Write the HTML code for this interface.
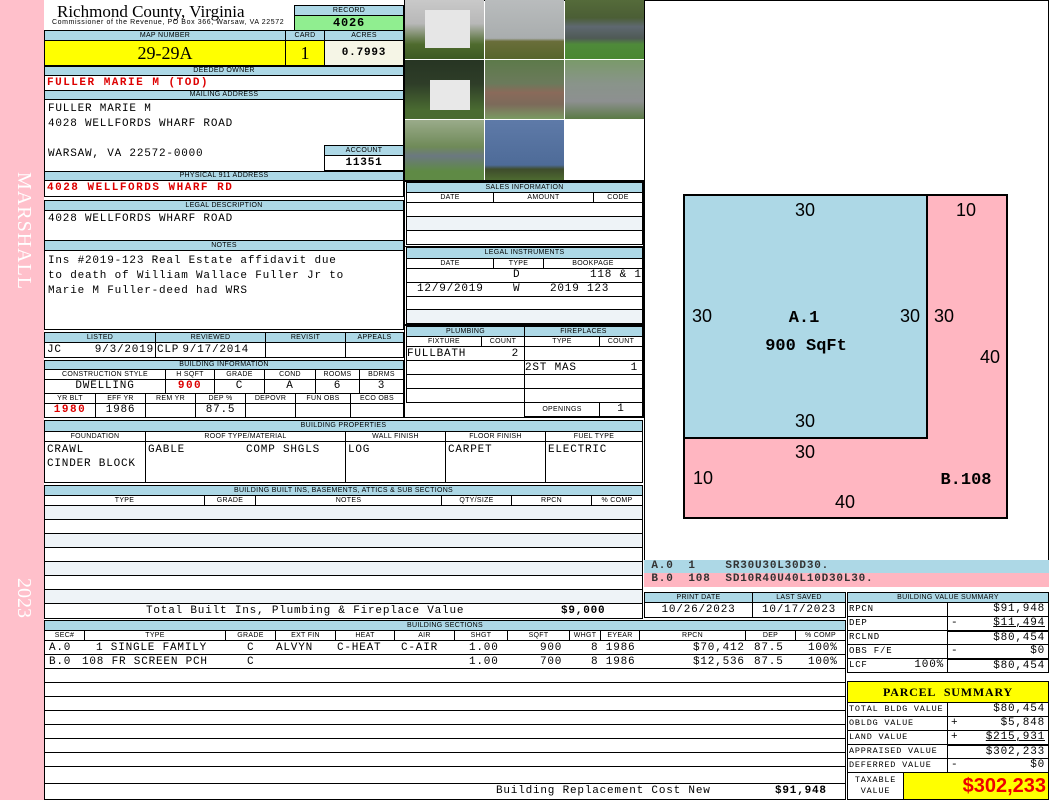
<!DOCTYPE html><html><head><meta charset="utf-8"><style>
*{margin:0;padding:0;box-sizing:border-box}
body{width:1050px;height:800px;position:relative;background:#fff;overflow:hidden;font-family:"Liberation Sans",sans-serif}
.a{position:absolute}
.h{position:absolute;background:#add8e6;border:1px solid #000;font:7px/9px "Liberation Sans",sans-serif;letter-spacing:.3px;text-align:center;color:#000;overflow:hidden;white-space:nowrap}
.c{position:absolute;border:1px solid #000;font:11px/13px "Liberation Mono",monospace;letter-spacing:.8px;color:#000;white-space:nowrap;overflow:hidden;background:#fff}
.m{font-family:"Liberation Mono",monospace}
.r{color:#d00;font-weight:bold;letter-spacing:1.5px}
.rt{text-align:right;padding-right:3px}
.ct{text-align:center}
.lb{background:#eef3f7}
.s{letter-spacing:0}
</style></head><body>
<div class="a" style="left:0;top:0;width:44px;height:800px;background:#ffc0cb"></div>
<div class="a" style="left:9px;top:172px;width:26px;height:150px;color:#fff;font:20px 'Liberation Serif',serif;writing-mode:vertical-rl;letter-spacing:1px">MARSHALL</div>
<div class="a" style="left:9px;top:578px;width:26px;height:60px;color:#fff;font:20px 'Liberation Serif',serif;writing-mode:vertical-rl">2023</div>

<div class="a" style="left:57px;top:2px;font:17px/19px 'Liberation Serif',serif">Richmond County, Virginia</div>
<div class="a" style="left:52px;top:19px;font:7px/8px 'Liberation Sans',sans-serif;letter-spacing:.6px">Commissioner of the Revenue, PO Box 366, Warsaw, VA 22572</div>
<div class="h" style="left:294px;top:5px;width:110px;height:11px">RECORD</div>
<div class="c ct" style="left:294px;top:15px;width:110px;height:16px;background:#90ee90;font-weight:bold;font-size:12px;line-height:14px">4026</div>

<div class="h" style="left:44px;top:30px;width:242px;height:11px">MAP NUMBER</div>
<div class="h" style="left:285px;top:30px;width:40px;height:11px">CARD</div>
<div class="h" style="left:324px;top:30px;width:80px;height:11px">ACRES</div>
<div class="c ct s" style="left:44px;top:40px;width:242px;height:26px;background:#ffff00;font:18px/24px 'Liberation Serif',serif">29-29A</div>
<div class="c ct s" style="left:285px;top:40px;width:40px;height:26px;background:#ffff00;font:18px/24px 'Liberation Serif',serif">1</div>
<div class="c ct" style="left:324px;top:40px;width:80px;height:26px;background:#f5f5e6;font-weight:bold;line-height:24px">0.7993</div>

<div class="h" style="left:44px;top:66px;width:360px;height:10px;line-height:8px">DEEDED OWNER</div>
<div class="c r" style="left:44px;top:75px;width:360px;height:16px;padding-left:2px;line-height:15px">FULLER MARIE M (TOD)</div>
<div class="h" style="left:44px;top:90px;width:360px;height:10px;line-height:8px">MAILING ADDRESS</div>
<div class="c" style="left:44px;top:99px;width:360px;height:73px;padding:2px 0 0 3px;line-height:15px">FULLER MARIE M<br>4028 WELLFORDS WHARF ROAD<br><br>WARSAW, VA 22572-0000</div>
<div class="h" style="left:324px;top:145px;width:80px;height:11px">ACCOUNT</div>
<div class="c ct" style="left:324px;top:155px;width:80px;height:16px;font-weight:bold;line-height:15px">11351</div>
<div class="h" style="left:44px;top:171px;width:360px;height:10px;line-height:8px">PHYSICAL 911 ADDRESS</div>
<div class="c r" style="left:44px;top:180px;width:360px;height:17px;padding-left:2px;line-height:15px">4028 WELLFORDS WHARF RD</div>

<div class="h" style="left:44px;top:200px;width:360px;height:11px">LEGAL DESCRIPTION</div>
<div class="c" style="left:44px;top:210px;width:360px;height:31px;padding:2px 0 0 3px">4028 WELLFORDS WHARF ROAD</div>
<div class="h" style="left:44px;top:240px;width:360px;height:11px">NOTES</div>
<div class="c" style="left:44px;top:250px;width:360px;height:80px;padding:3px 0 0 3px;line-height:15px">Ins #2019-123 Real Estate affidavit due<br>to death of William Wallace Fuller Jr to<br>Marie M Fuller-deed had WRS</div>

<div class="h" style="left:44px;top:332px;width:112px;height:11px">LISTED</div>
<div class="h" style="left:155px;top:332px;width:111px;height:11px">REVIEWED</div>
<div class="h" style="left:265px;top:332px;width:81px;height:11px">REVISIT</div>
<div class="h" style="left:345px;top:332px;width:59px;height:11px">APPEALS</div>
<div class="c" style="left:44px;top:342px;width:112px;height:16px;line-height:14px"><span class="a" style="left:2px">JC</span><span class="a" style="right:1px">9/3/2019</span></div>
<div class="c" style="left:155px;top:342px;width:111px;height:16px;line-height:14px"><span class="a" style="left:1px">CLP</span><span class="a" style="right:16px">9/17/2014</span></div>
<div class="c" style="left:265px;top:342px;width:81px;height:16px"></div>
<div class="c" style="left:345px;top:342px;width:59px;height:16px"></div>

<div class="h" style="left:44px;top:360px;width:360px;height:10px;line-height:8px">BUILDING INFORMATION</div>
<div class="h" style="left:44px;top:369px;width:122px;height:11px;background:#fff">CONSTRUCTION STYLE</div>
<div class="h" style="left:165px;top:369px;width:50px;height:11px;background:#fff">H SQFT</div>
<div class="h" style="left:214px;top:369px;width:51px;height:11px;background:#fff">GRADE</div>
<div class="h" style="left:264px;top:369px;width:52px;height:11px;background:#fff">COND</div>
<div class="h" style="left:315px;top:369px;width:45px;height:11px;background:#fff">ROOMS</div>
<div class="h" style="left:359px;top:369px;width:45px;height:11px;background:#fff">BDRMS</div>
<div class="c ct" style="left:44px;top:379px;width:122px;height:15px;line-height:13px">DWELLING</div>
<div class="c ct r" style="left:165px;top:379px;width:50px;height:15px;line-height:13px">900</div>
<div class="c ct" style="left:214px;top:379px;width:51px;height:15px;line-height:13px">C</div>
<div class="c ct" style="left:264px;top:379px;width:52px;height:15px;line-height:13px">A</div>
<div class="c ct" style="left:315px;top:379px;width:45px;height:15px;line-height:13px">6</div>
<div class="c ct" style="left:359px;top:379px;width:45px;height:15px;line-height:13px">3</div>
<div class="h" style="left:44px;top:393px;width:52px;height:11px;background:#fff">YR BLT</div>
<div class="h" style="left:95px;top:393px;width:51px;height:11px;background:#fff">EFF YR</div>
<div class="h" style="left:145px;top:393px;width:51px;height:11px;background:#fff">REM YR</div>
<div class="h" style="left:195px;top:393px;width:51px;height:11px;background:#fff">DEP %</div>
<div class="h" style="left:245px;top:393px;width:51px;height:11px;background:#fff">DEPOVR</div>
<div class="h" style="left:295px;top:393px;width:56px;height:11px;background:#fff">FUN OBS</div>
<div class="h" style="left:350px;top:393px;width:54px;height:11px;background:#fff">ECO OBS</div>
<div class="c ct r" style="left:44px;top:403px;width:52px;height:15px;line-height:13px">1980</div>
<div class="c ct" style="left:95px;top:403px;width:51px;height:15px;line-height:13px">1986</div>
<div class="c" style="left:145px;top:403px;width:51px;height:15px"></div>
<div class="c ct" style="left:195px;top:403px;width:51px;height:15px;line-height:13px">87.5</div>
<div class="c" style="left:245px;top:403px;width:51px;height:15px"></div>
<div class="c" style="left:295px;top:403px;width:56px;height:15px"></div>
<div class="c" style="left:350px;top:403px;width:54px;height:15px"></div>

<!-- photos -->
<div class="a" style="left:404px;top:0;width:241px;height:181px;background:#fff;border:1px solid #000"></div>
<div class="a" style="left:405px;top:0;width:79px;height:59px;background:linear-gradient(#c9c9c9 0,#b8b8b8 40%,#4f6b2e 75%,#3d5a23)"><div class="a" style="left:20px;top:10px;width:45px;height:38px;background:#e6e6e6"></div></div>
<div class="a" style="left:485px;top:0;width:79px;height:59px;background:linear-gradient(#b9bcbd 0,#a9adae 65%,#6a6e3a 70%,#56652c)"></div>
<div class="a" style="left:565px;top:0;width:79px;height:59px;background:linear-gradient(#556b3a 0,#4b5e35 30%,#5e6870 45%,#4f5a55 65%,#4f8a3a 75%,#4a8832)"></div>
<div class="a" style="left:405px;top:60px;width:79px;height:59px;background:linear-gradient(#273523 0,#2e3d28 40%,#4a6b31 85%)"><div class="a" style="left:25px;top:20px;width:40px;height:30px;background:#e8e8e8"></div></div>
<div class="a" style="left:485px;top:60px;width:79px;height:59px;background:linear-gradient(#5d7a4a 0,#6b7a5b 40%,#8a6a5a 55%,#7c6a5a 75%,#7a9a62)"></div>
<div class="a" style="left:565px;top:60px;width:79px;height:59px;background:linear-gradient(#7a9a6a 0,#89948a 40%,#8d9090 70%,#5a7a45)"></div>
<div class="a" style="left:405px;top:120px;width:79px;height:60px;background:linear-gradient(#9aab8a 0,#6f8a58 45%,#6b7880 60%,#5f8a45 85%)"></div>
<div class="a" style="left:485px;top:120px;width:79px;height:60px;background:linear-gradient(#5e7aa8 0,#4e6b98 75%,#3e4c2c 82%,#4d6a30)"></div>

<!-- sales -->
<div class="a" style="left:404px;top:181px;width:240px;height:66px;border:1px solid #000"></div>
<div class="h" style="left:406px;top:182px;width:237px;height:11px">SALES INFORMATION</div>
<div class="h" style="left:406px;top:192px;width:88px;height:11px;background:#fff">DATE</div>
<div class="h" style="left:493px;top:192px;width:101px;height:11px;background:#fff">AMOUNT</div>
<div class="h" style="left:593px;top:192px;width:50px;height:11px;background:#fff">CODE</div>
<div class="c" style="left:406px;top:202px;width:237px;height:15px"></div>
<div class="c lb" style="left:406px;top:216px;width:237px;height:15px"></div>
<div class="c" style="left:406px;top:230px;width:237px;height:15px"></div>

<div class="a" style="left:404px;top:246px;width:240px;height:79px;border:1px solid #000"></div>
<div class="h" style="left:406px;top:247px;width:237px;height:12px">LEGAL INSTRUMENTS</div>
<div class="h" style="left:406px;top:258px;width:88px;height:11px;background:#fff">DATE</div>
<div class="h" style="left:493px;top:258px;width:51px;height:11px;background:#fff">TYPE</div>
<div class="h" style="left:543px;top:258px;width:100px;height:11px;background:#fff">BOOKPAGE</div>
<div class="c" style="left:406px;top:268px;width:237px;height:15px;line-height:13px"><span class="a" style="left:106px">D</span><span class="a" style="left:183px">118 &amp; 1</span></div>
<div class="c" style="left:406px;top:282px;width:237px;height:15px;line-height:13px"><span class="a" style="left:10px">12/9/2019</span><span class="a" style="left:106px">W</span><span class="a" style="left:143px">2019 123</span></div>
<div class="c" style="left:406px;top:296px;width:237px;height:14px"></div>
<div class="c lb" style="left:406px;top:309px;width:237px;height:15px"></div>

<div class="a" style="left:404px;top:325px;width:240px;height:93px;border:1px solid #000"></div>
<div class="h" style="left:406px;top:326px;width:119px;height:11px">PLUMBING</div>
<div class="h" style="left:524px;top:326px;width:119px;height:11px">FIREPLACES</div>
<div class="h" style="left:406px;top:336px;width:76px;height:11px;background:#fff">FIXTURE</div>
<div class="h" style="left:481px;top:336px;width:44px;height:11px;background:#fff">COUNT</div>
<div class="h" style="left:524px;top:336px;width:76px;height:11px;background:#fff">TYPE</div>
<div class="h" style="left:599px;top:336px;width:44px;height:11px;background:#fff">COUNT</div>
<div class="c" style="left:406px;top:346px;width:119px;height:15px;line-height:15px">FULLBATH<span class="a" style="right:5px;top:0">2</span></div>
<div class="c" style="left:406px;top:360px;width:119px;height:15px"></div>
<div class="c" style="left:406px;top:374px;width:119px;height:15px"></div>
<div class="c" style="left:406px;top:388px;width:119px;height:15px"></div>
<div class="c" style="left:524px;top:346px;width:119px;height:15px"></div>
<div class="c" style="left:524px;top:360px;width:119px;height:15px;line-height:15px">2ST MAS<span class="a" style="right:4px;top:0">1</span></div>
<div class="c" style="left:524px;top:374px;width:119px;height:15px"></div>
<div class="c" style="left:524px;top:388px;width:119px;height:15px"></div>
<div class="h" style="left:524px;top:402px;width:76px;height:15px;background:#fff;line-height:13px">OPENINGS</div>
<div class="c ct" style="left:599px;top:402px;width:44px;height:15px;line-height:13px">1</div>

<!-- building properties -->
<div class="h" style="left:44px;top:420px;width:599px;height:12px">BUILDING PROPERTIES</div>
<div class="h" style="left:44px;top:431px;width:102px;height:11px;background:#fff">FOUNDATION</div>
<div class="h" style="left:145px;top:431px;width:201px;height:11px;background:#fff">ROOF TYPE/MATERIAL</div>
<div class="h" style="left:345px;top:431px;width:101px;height:11px;background:#fff">WALL FINISH</div>
<div class="h" style="left:445px;top:431px;width:101px;height:11px;background:#fff">FLOOR FINISH</div>
<div class="h" style="left:545px;top:431px;width:98px;height:11px;background:#fff">FUEL TYPE</div>
<div class="c" style="left:44px;top:441px;width:102px;height:42px;padding:1px 2px;line-height:14px">CRAWL<br>CINDER BLOCK</div>
<div class="c" style="left:145px;top:441px;width:201px;height:42px;padding:1px 2px;line-height:14px">GABLE<span class="a" style="left:100px;top:1px">COMP SHGLS</span></div>
<div class="c" style="left:345px;top:441px;width:101px;height:42px;padding:1px 2px;line-height:14px">LOG</div>
<div class="c" style="left:445px;top:441px;width:101px;height:42px;padding:1px 2px;line-height:14px">CARPET</div>
<div class="c" style="left:545px;top:441px;width:98px;height:42px;padding:1px 2px;line-height:14px">ELECTRIC</div>

<!-- built ins -->
<div class="h" style="left:44px;top:485px;width:599px;height:11px">BUILDING BUILT INS, BASEMENTS, ATTICS &amp; SUB SECTIONS</div>
<div class="h" style="left:44px;top:495px;width:161px;height:11px;background:#fff">TYPE</div>
<div class="h" style="left:204px;top:495px;width:52px;height:11px;background:#fff">GRADE</div>
<div class="h" style="left:255px;top:495px;width:187px;height:11px;background:#fff">NOTES</div>
<div class="h" style="left:441px;top:495px;width:71px;height:11px;background:#fff">QTY/SIZE</div>
<div class="h" style="left:511px;top:495px;width:81px;height:11px;background:#fff">RPCN</div>
<div class="h" style="left:591px;top:495px;width:52px;height:11px;background:#fff">% COMP</div>
<div class="c lb" style="left:44px;top:505px;width:599px;height:15px"></div>
<div class="c" style="left:44px;top:519px;width:599px;height:15px"></div>
<div class="c lb" style="left:44px;top:533px;width:599px;height:15px"></div>
<div class="c" style="left:44px;top:547px;width:599px;height:15px"></div>
<div class="c lb" style="left:44px;top:561px;width:599px;height:15px"></div>
<div class="c" style="left:44px;top:575px;width:599px;height:15px"></div>
<div class="c lb" style="left:44px;top:589px;width:599px;height:15px"></div>
<div class="c" style="left:44px;top:603px;width:599px;height:16px;line-height:15px"><span class="a" style="left:101px">Total Built Ins, Plumbing &amp; Fireplace Value</span><span class="a" style="left:516px;font-weight:bold">$9,000</span></div>

<!-- building sections -->
<div class="h" style="left:44px;top:620px;width:802px;height:11px">BUILDING SECTIONS</div>
<div class="h" style="left:44px;top:630px;width:41px;height:11px;background:#fff">SEC#</div>
<div class="h" style="left:84px;top:630px;width:142px;height:11px;background:#fff">TYPE</div>
<div class="h" style="left:225px;top:630px;width:51px;height:11px;background:#fff">GRADE</div>
<div class="h" style="left:275px;top:630px;width:61px;height:11px;background:#fff">EXT FIN</div>
<div class="h" style="left:335px;top:630px;width:60px;height:11px;background:#fff">HEAT</div>
<div class="h" style="left:394px;top:630px;width:61px;height:11px;background:#fff">AIR</div>
<div class="h" style="left:454px;top:630px;width:54px;height:11px;background:#fff">SHGT</div>
<div class="h" style="left:507px;top:630px;width:63px;height:11px;background:#fff">SQFT</div>
<div class="h" style="left:569px;top:630px;width:32px;height:11px;background:#fff">WHGT</div>
<div class="h" style="left:600px;top:630px;width:40px;height:11px;background:#fff">EYEAR</div>
<div class="h" style="left:639px;top:630px;width:107px;height:11px;background:#fff">RPCN</div>
<div class="h" style="left:745px;top:630px;width:51px;height:11px;background:#fff">DEP</div>
<div class="h" style="left:795px;top:630px;width:51px;height:11px;background:#fff">% COMP</div>
<div class="c" style="left:44px;top:640px;width:802px;height:15px;line-height:14px"><span class="a" style="left:4px">A.0</span><span class="a" style="left:51px">1 SINGLE FAMILY</span><span class="a" style="left:202px">C</span><span class="a" style="left:231px">ALVYN</span><span class="a" style="left:292px">C-HEAT</span><span class="a" style="left:356px">C-AIR</span><span class="a" style="left:424px">1.00</span><span class="a" style="left:495px">900</span><span class="a" style="left:546px">8 1986</span><span class="a" style="left:648px">$70,412</span><span class="a" style="left:709px">87.5</span><span class="a" style="left:763px">100%</span></div>
<div class="c" style="left:44px;top:654px;width:802px;height:15px;line-height:14px"><span class="a" style="left:4px">B.0</span><span class="a" style="left:37px">108 FR SCREEN PCH</span><span class="a" style="left:202px">C</span><span class="a" style="left:424px">1.00</span><span class="a" style="left:495px">700</span><span class="a" style="left:546px">8 1986</span><span class="a" style="left:648px">$12,536</span><span class="a" style="left:709px">87.5</span><span class="a" style="left:763px">100%</span></div>
<div class="c" style="left:44px;top:668px;width:802px;height:15px"></div>
<div class="c" style="left:44px;top:682px;width:802px;height:15px"></div>
<div class="c" style="left:44px;top:696px;width:802px;height:15px"></div>
<div class="c" style="left:44px;top:710px;width:802px;height:15px"></div>
<div class="c" style="left:44px;top:724px;width:802px;height:15px"></div>
<div class="c" style="left:44px;top:738px;width:802px;height:15px"></div>
<div class="c" style="left:44px;top:752px;width:802px;height:15px"></div>
<div class="c" style="left:44px;top:766px;width:802px;height:18px"></div>
<div class="c" style="left:44px;top:783px;width:802px;height:17px;line-height:15px"><span class="a" style="left:451px">Building Replacement Cost New</span><span class="a" style="left:730px;font-weight:bold">$91,948</span></div>

<!-- sketch -->
<div class="a" style="left:644px;top:0;width:405px;height:561px;border:1px solid #000"></div>
<svg class="a" style="left:0;top:0" width="1050" height="560">
<rect x="684" y="195" width="323" height="323" fill="#ffb6c1" stroke="#000" stroke-width="2"/>
<rect x="684" y="195" width="243" height="243" fill="#add8e6" stroke="#000" stroke-width="2"/>
<g font-family="Liberation Sans,sans-serif" font-size="18" text-anchor="middle">
<text x="805" y="216">30</text><text x="966" y="216">10</text>
<text x="702" y="322">30</text><text x="910" y="322">30</text><text x="944" y="322">30</text>
<text x="990" y="363">40</text><text x="805" y="427">30</text><text x="805" y="458">30</text>
<text x="703" y="484">10</text><text x="845" y="508">40</text></g>
<g font-family="Liberation Mono,monospace" font-size="17" font-weight="bold" text-anchor="middle">
<text x="804" y="322">A.1</text><text x="806" y="350">900 SqFt</text><text x="966" y="484">B.108</text></g>
</svg>
<div class="c" style="left:644px;top:560px;width:405px;height:14px;background:#add8e6;border-width:0;line-height:13px;font-weight:bold;color:#333">&nbsp;A.0&nbsp;&nbsp;1&nbsp;&nbsp;&nbsp;&nbsp;SR30U30L30D30.</div>
<div class="c" style="left:644px;top:573px;width:405px;height:14px;background:#ffb6c1;border-width:0;line-height:13px;font-weight:bold;color:#333">&nbsp;B.0&nbsp;&nbsp;108&nbsp;&nbsp;SD10R40U40L10D30L30.</div>

<div class="h" style="left:644px;top:592px;width:109px;height:11px">PRINT DATE</div>
<div class="h" style="left:752px;top:592px;width:94px;height:11px">LAST SAVED</div>
<div class="c ct" style="left:644px;top:602px;width:109px;height:16px;line-height:15px">10/26/2023</div>
<div class="c ct" style="left:752px;top:602px;width:94px;height:16px;line-height:15px">10/17/2023</div>

<div class="h" style="left:847px;top:592px;width:202px;height:11px">BUILDING VALUE SUMMARY</div>
<div class="c" style="left:847px;top:602px;width:101px;height:15px;font-size:9px;line-height:13px;padding-left:1px">RPCN</div>
<div class="c rt" style="left:947px;top:602px;width:102px;height:15px;line-height:13px">$91,948</div>
<div class="c" style="left:847px;top:616px;width:101px;height:15px;font-size:9px;line-height:13px;padding-left:1px">DEP</div>
<div class="c rt" style="left:947px;top:616px;width:102px;height:15px;line-height:13px"><span class="a" style="left:3px">-</span><u>$11,494</u></div>
<div class="c" style="left:847px;top:630px;width:101px;height:15px;font-size:9px;line-height:13px;padding-left:1px">RCLND</div>
<div class="c rt" style="left:947px;top:630px;width:102px;height:15px;line-height:13px;border-top-width:2px">$80,454</div>
<div class="c" style="left:847px;top:644px;width:101px;height:15px;font-size:9px;line-height:13px;padding-left:1px">OBS F/E</div>
<div class="c rt" style="left:947px;top:644px;width:102px;height:15px;line-height:13px"><span class="a" style="left:3px">-</span>$0</div>
<div class="c" style="left:847px;top:658px;width:101px;height:15px;font-size:9px;line-height:13px;padding-left:1px">LCF<span class="a" style="right:3px;font-size:11px">100%</span></div>
<div class="c rt" style="left:947px;top:658px;width:102px;height:15px;line-height:13px;border-top-width:2px">$80,454</div>

<div class="c ct" style="left:847px;top:681px;width:202px;height:22px;background:#ffff00;font-weight:bold;line-height:20px;font-family:'Liberation Serif',serif;font-size:12px">PARCEL&nbsp;&nbsp;SUMMARY</div>
<div class="c" style="left:847px;top:702px;width:101px;height:15px;font-size:8.5px;line-height:13px;padding-left:1px">TOTAL BLDG VALUE</div>
<div class="c rt" style="left:947px;top:702px;width:102px;height:15px;line-height:13px">$80,454</div>
<div class="c" style="left:847px;top:716px;width:101px;height:15px;font-size:8.5px;line-height:13px;padding-left:1px">OBLDG VALUE</div>
<div class="c rt" style="left:947px;top:716px;width:102px;height:15px;line-height:13px"><span class="a" style="left:3px">+</span>$5,848</div>
<div class="c" style="left:847px;top:730px;width:101px;height:15px;font-size:8.5px;line-height:13px;padding-left:1px">LAND VALUE</div>
<div class="c rt" style="left:947px;top:730px;width:102px;height:15px;line-height:13px"><span class="a" style="left:3px">+</span><u>$215,931</u></div>
<div class="c" style="left:847px;top:744px;width:101px;height:15px;font-size:8.5px;line-height:13px;padding-left:1px">APPRAISED VALUE</div>
<div class="c rt" style="left:947px;top:744px;width:102px;height:15px;line-height:13px;border-top-width:2px">$302,233</div>
<div class="c" style="left:847px;top:758px;width:101px;height:15px;font-size:8.5px;line-height:13px;padding-left:1px">DEFERRED VALUE</div>
<div class="c rt" style="left:947px;top:758px;width:102px;height:15px;line-height:13px"><span class="a" style="left:3px">-</span>$0</div>
<div class="c ct" style="left:847px;top:772px;width:57px;height:28px;font-size:8.5px;line-height:11px;padding-top:2px">TAXABLE<br>VALUE</div>
<div class="c rt s" style="left:903px;top:772px;width:146px;height:28px;background:#ffff00;color:#e00;font:bold 20px/26px 'Liberation Sans',sans-serif;padding-right:2px">$302,233</div>
</body></html>
